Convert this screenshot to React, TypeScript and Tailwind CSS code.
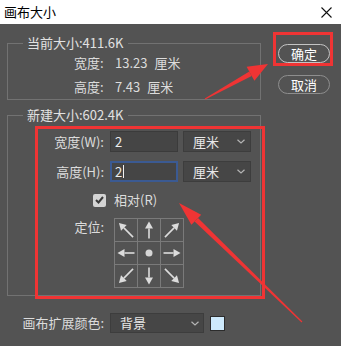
import React from 'react';

const cjk = "font-['Noto_Sans_CJK_SC','Noto_Sans',sans-serif]";

function Chevron() {
  return (
    <svg width="8" height="5" viewBox="0 0 8 5" className="shrink-0">
      <polyline points="0.5,0.8 4,4 7.5,0.8" fill="none" stroke="#b5b5b5" strokeWidth="1.2" />
    </svg>
  );
}

function AnchorArrow({ dx, dy }: { dx: number; dy: number }) {
  if (dx === 0 && dy === 0) {
    return (
      <svg width="22" height="22" viewBox="0 0 22 22">
        <circle cx="11" cy="11" r="3.5" fill="#d6d6d6" />
      </svg>
    );
  }
  const diag = dx !== 0 && dy !== 0;
  const n = Math.hypot(dx, dy);
  const ux = dx / n;
  const uy = dy / n;
  const len = diag ? 20 : 17;
  const tip = [11 + (ux * len) / 2, 11 + (uy * len) / 2];
  const tail = [11 - (ux * len) / 2, 11 - (uy * len) / 2];
  const base = [tip[0] - ux * 7, tip[1] - uy * 7];
  const px = -uy;
  const py = ux;
  const head = `${tip[0]},${tip[1]} ${base[0] + px * 4},${base[1] + py * 4} ${base[0] - px * 4},${base[1] - py * 4}`;
  return (
    <svg width="22" height="22" viewBox="0 0 22 22">
      <line x1={tail[0]} y1={tail[1]} x2={base[0]} y2={base[1]} stroke="#dcdcdc" strokeWidth="1.6" />
      <polygon points={head} fill="#dcdcdc" />
    </svg>
  );
}

const anchors = [
  [-1, -1], [0, -1], [1, -1],
  [-1, 0], [0, 0], [1, 0],
  [-1, 1], [0, 1], [1, 1],
];

export default function App() {
  return (
    <div className={`relative w-[341px] h-[346px] overflow-hidden bg-[#535353] text-[13px] text-[#dcdcdc] ${cjk}`}>
      {/* title bar */}
      <div className="h-[24px] bg-white flex items-center justify-between pl-[4px] pr-[9px]">
        <span className="text-[13px] leading-[20px] text-black">画布大小</span>
        <svg width="11" height="11" viewBox="0 0 11 11">
          <path d="M0.5 0.5 L10.5 10.5 M10.5 0.5 L0.5 10.5" stroke="#111" strokeWidth="1.1" />
        </svg>
      </div>

      <div className="flex pl-[7px] pt-[10px]">
        {/* left column */}
        <div className="w-[254px] flex flex-col">
          <fieldset className="border border-[#727272] h-[66px]">
            <legend className="ml-[15px] px-[4px] leading-[18px] text-[#e2e2e2]">当前大小:411.6K</legend>
            <div className="pt-[1px] flex flex-col gap-[4px]">
              <div className="flex h-[20px] items-center">
                <span className="ml-[66px] w-[41px]">宽度:</span>
                <span className="mr-[7px]">13.23</span>
                <span>厘米</span>
              </div>
              <div className="flex h-[20px] items-center">
                <span className="ml-[66px] w-[41px]">高度:</span>
                <span className="mr-[7px]">7.43</span>
                <span>厘米</span>
              </div>
            </div>
          </fieldset>

          <fieldset className="mt-[6px] border border-[#727272] h-[190px]">
            <legend className="ml-[15px] px-[4px] leading-[18px] text-[#e2e2e2]">新建大小:602.4K</legend>
            <div className="pt-[7px] flex flex-col">
              <div className="flex h-[21px] items-center">
                <span className="w-[96px] text-right">宽度(W):</span>
                <div className="ml-[6px] w-[68px] h-[21px] bg-[#454545] border border-[#3b3b3b] flex items-center pl-[4px] text-[#eeeeee]">2</div>
                <div className="ml-[5px] w-[68px] h-[21px] bg-[#464646] border border-[#3d3d3d] flex items-center justify-between pl-[9px] pr-[5px] text-[#e8e8e8]">
                  <span>厘米</span>
                  <Chevron />
                </div>
              </div>
              <div className="mt-[9px] flex h-[21px] items-center">
                <span className="w-[96px] text-right">高度(H):</span>
                <div className="ml-[6px] w-[68px] h-[21px] bg-[#454545] border-2 border-[#3b5a92] flex items-center pl-[3px] text-[#eeeeee]">
                  <span>2</span>
                  <span className="ml-[1px] w-px h-[13px] bg-[#f0f0f0]" />
                </div>
                <div className="ml-[5px] w-[68px] h-[21px] bg-[#464646] border border-[#3d3d3d] flex items-center justify-between pl-[9px] pr-[5px] text-[#e8e8e8]">
                  <span>厘米</span>
                  <Chevron />
                </div>
              </div>
              <div className="mt-[10px] flex h-[16px] items-center">
                <div className="ml-[85px] w-[13px] h-[13px] rounded-[2px] bg-[#d4d4d4] flex items-center justify-center">
                  <svg width="9" height="8" viewBox="0 0 9 8">
                    <polyline points="1,4 3.5,6.5 8,1" fill="none" stroke="#3a3a3a" strokeWidth="2" />
                  </svg>
                </div>
                <span className="ml-[8px]">相对(R)</span>
              </div>
              <div className="mt-[10px] flex">
                <span className="w-[96px] text-right leading-[18px]">定位:</span>
                <div className="ml-[10px] grid grid-cols-3 gap-px bg-[#7a7a7a] p-px">
                  {anchors.map(([dx, dy], i) => (
                    <div key={i} className="w-[22px] h-[22px] bg-[#535353]">
                      <AnchorArrow dx={dx} dy={dy} />
                    </div>
                  ))}
                </div>
              </div>
            </div>
          </fieldset>

          <div className="mt-[17px] flex items-center h-[20px]">
            <span className="w-[97px] text-right">画布扩展颜色:</span>
            <div className="ml-[6px] w-[94px] h-[20px] bg-[#464646] border border-[#3d3d3d] flex items-center justify-between pl-[9px] pr-[4px] text-[#e8e8e8]">
              <span>背景</span>
              <Chevron />
            </div>
            <div className="ml-[6px] w-[15px] h-[15px] bg-[#cde9fc] border border-[#2c2c2c]" />
          </div>
        </div>

        {/* right column */}
        <div className="ml-[17px] pt-[10px] flex flex-col gap-[12px]">
          <button className="w-[52px] h-[19px] rounded-full border border-[#c4c4c4] text-white leading-[17px]">确定</button>
          <button className="w-[52px] h-[19px] rounded-full border border-[#8e8e8e] text-white leading-[17px]">取消</button>
        </div>
      </div>

      {/* red annotations */}
      <svg className="absolute inset-0 pointer-events-none" width="341" height="346" viewBox="0 0 341 346">
        <rect x="274.5" y="33.5" width="57" height="31" fill="none" stroke="#ef3434" strokeWidth="3" />
        <rect x="36.5" y="127.5" width="227" height="170" fill="none" stroke="#ef3434" strokeWidth="3" />
        <polygon points="205.2,99.4 204.8,98.6 249.3,71.5 251.7,75.9" fill="#ef3434" />
        <polygon points="268,64 254.4,80.7 246.6,66.7" fill="#ef3434" />
        <polygon points="301.6,322.4 302.4,321.6 198,217.9 194.6,221.5" fill="#ef3434" />
        <polygon points="179,203 191.4,224.7 201.2,214.7" fill="#ef3434" />
      </svg>
    </div>
  );
}
